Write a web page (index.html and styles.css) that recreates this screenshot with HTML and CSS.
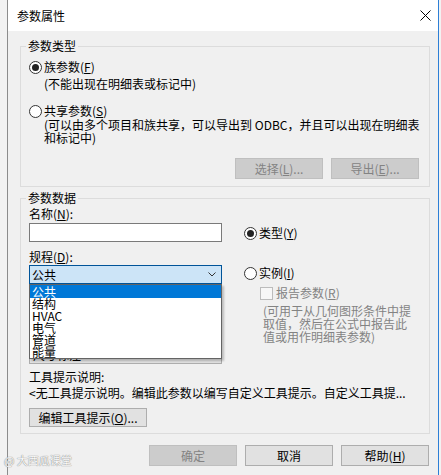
FILE: index.html
```html
<!DOCTYPE html>
<html lang="zh-CN">
<head>
<meta charset="utf-8">
<title>参数属性</title>
<link rel="stylesheet" href="styles.css">
</head>
<body>
<div class="window">
  <div class="titlebar">
    <span class="title">参数属性</span>
    <svg class="close" width="11" height="11" viewBox="0 0 11 11"><path d="M0.5 0.5L10.5 10.5M10.5 0.5L0.5 10.5" stroke="#000" stroke-width="1" fill="none"/></svg>
  </div>
  <div class="content">
    <fieldset class="group g1">
      <legend>参数类型</legend>
      <div class="g1-body">
        <div class="radio-row r1"><span class="radio checked"></span><span>族参数(<u>F</u>)</span></div>
        <div class="note n1">(不能出现在明细表或标记中)</div>
        <div class="radio-row r2"><span class="radio"></span><span>共享参数(<u>S</u>)</span></div>
        <div class="note n2">(可以由多个项目和族共享，可以导出到 ODBC，并且可以出现在明细表<br>和标记中)</div>
        <div class="btn-row">
          <button class="btn disabled">选择(<u>L</u>)...</button>
          <button class="btn disabled">导出(<u>E</u>)...</button>
        </div>
      </div>
    </fieldset>

    <fieldset class="group g2">
      <legend>参数数据</legend>
      <div class="g2-body">
        <div class="cols">
          <div class="col-left">
            <div class="label l-name">名称(<u>N</u>):</div>
            <div class="input"></div>
            <div class="label l-disc">规程(<u>D</u>):</div>
            <div class="select-wrap">
              <div class="select">
                <span>公共</span>
                <svg class="chev" width="8" height="5" viewBox="0 0 8 5"><path d="M0.5 0.5L4 4L7.5 0.5" stroke="#333" stroke-width="1" fill="none"/></svg>
              </div>
              <div class="dropdown">
                <div class="opt sel">公共</div>
                <div class="opt">结构</div>
                <div class="opt">HVAC</div>
                <div class="opt">电气</div>
                <div class="opt">管道</div>
                <div class="opt">能量</div>
              </div>
            </div>
            <div class="combo c2"><span class="combo-text">尺寸标注</span></div>
          </div>
          <div class="col-right">
            <div class="radio-row rt"><span class="radio checked"></span><span>类型(<u>Y</u>)</span></div>
            <div class="radio-row ri"><span class="radio"></span><span>实例(<u>I</u>)</span></div>
            <div class="check-row"><span class="checkbox"></span><span>报告参数(<u>R</u>)</span></div>
            <div class="gray-note">(可用于从几何图形条件中提<br>取值，然后在公式中报告此<br>值或用作明细表参数)</div>
          </div>
        </div>
        <div class="label tip-label">工具提示说明:</div>
        <div class="tip-text">&lt;无工具提示说明。编辑此参数以编写自定义工具提示。自定义工具提...</div>
        <button class="btn tip-btn">编辑工具提示(<u>O</u>)...</button>
      </div>
    </fieldset>

    <div class="footer">
      <button class="btn disabled">确定</button>
      <button class="btn">取消</button>
      <button class="btn">帮助(<u>H</u>)</button>
    </div>
  </div>
</div>
<div class="watermark">@ 大西瓜课堂</div>
</body>
</html>
```

FILE: styles.css
```css
* { box-sizing: border-box; }
html, body { margin: 0; padding: 0; }
body {
  width: 441px;
  height: 475px;
  overflow: hidden;
  position: relative;
  background: #f2f2f2;
  font-family: "Noto Sans CJK SC", "Microsoft YaHei", sans-serif;
  font-size: 12px;
  color: #000;
}
.window {
  margin-left: 7px;
  width: 432px;
  height: 475px;
  border-left: 1px solid #8c8c8c;
  border-right: 1px solid #2d7fd6;
  background: #f0f0f0;
}
.titlebar {
  height: 31px;
  background: #fff;
  display: flex;
  align-items: center;
  justify-content: space-between;
  padding: 0 7px 0 9px;
  line-height: 14px;
}
.close { display: block; }
.content { padding: 0 8px 0 12px; }

.group {
  margin: 0;
  padding: 0;
  min-width: 0;
  border: 1px solid #dcdcdc;
}
.group legend {
  margin-left: 5px;
  padding: 0 2px;
  line-height: 16px;
}
.g1 { margin-top: 7px; }
.g2 { margin-top: 3px; }

.g1-body { padding: 0 10px 7px 8px; }
.radio-row {
  display: flex;
  align-items: center;
  gap: 2px;
  line-height: 14px;
  height: 14px;
}
.radio {
  width: 13px;
  height: 13px;
  border: 1px solid #333;
  border-radius: 50%;
  background: #fff;
  display: flex;
  align-items: center;
  justify-content: center;
  flex: none;
}
.radio.checked::after {
  content: "";
  width: 7px;
  height: 7px;
  border-radius: 50%;
  background: #222;
}
.r1 { margin-top: 6px; }
.note { padding-left: 15px; line-height: 14px; white-space: nowrap; }
.n1 { margin-top: 3px; }
.r2 { margin-top: 13px; }
.n2 { line-height: 13px; }
.btn-row {
  margin-top: 14px;
  display: flex;
  justify-content: flex-end;
  gap: 8px;
}
.btn {
  font-family: inherit;
  font-size: 12px;
  color: #000;
  width: 88px;
  height: 21px;
  padding: 0;
  margin: 0;
  background: #e1e1e1;
  border: 1px solid #adadad;
  line-height: 18px;
}
.btn.disabled {
  background: #cccccc;
  border-color: #bfbfbf;
  color: #838383;
}

.g2-body { padding: 0 8px 6px 8px; }
.cols { display: flex; gap: 22px; }
.col-left { width: 193px; flex: none; }
.label { line-height: 14px; }
.l-name { margin-top: 1px; }
.input {
  margin-top: 2px;
  height: 19px;
  background: #fff;
  border: 1px solid #7a7a7a;
}
.l-disc { margin-top: 8px; }
.select-wrap { margin-top: 1px; position: relative; }
.select {
  height: 19px;
  background: #cce4f7;
  border: 1px solid #005499;
  display: flex;
  align-items: center;
  justify-content: space-between;
  padding: 0 5px 0 2px;
  line-height: 14px;
}
.chev { display: block; }
.dropdown {
  position: absolute;
  top: 100%;
  left: 0;
  width: 193px;
  background: #fff;
  border: 1px solid #646464;
  box-shadow: 2px 2px 2px rgba(0, 0, 0, 0.22);
  z-index: 2;
}
.opt {
  height: 12px;
  line-height: 12px;
  padding-left: 2px;
  font-size: 12px;
}
.opt.sel {
  height: 13px;
  line-height: 13px;
  background: #0078d7;
  color: #fff;
}
.combo {
  height: 20px;
  background: #e1e1e1;
  border: 1px solid #adadad;
  padding-left: 3px;
  line-height: 18px;
}
.c2 { margin-top: 60px; }
.combo-text { position: relative; top: 1px; }

.col-right { flex: 1; }
.rt { margin-top: 20px; }
.ri { margin-top: 26px; }
.check-row {
  margin-top: 6px;
  padding-left: 16px;
  display: flex;
  align-items: center;
  gap: 3px;
  line-height: 14px;
  color: #838383;
}
.checkbox {
  width: 13px;
  height: 13px;
  border: 1px solid #bcbcbc;
  background: #f7f7f7;
  flex: none;
}
.gray-note {
  margin-top: 4px;
  padding-left: 19px;
  line-height: 13px;
  color: #838383;
  white-space: nowrap;
}
.tip-label { margin-top: 6px; }
.tip-text { margin-top: 2px; line-height: 14px; white-space: nowrap; }
.tip-btn {
  margin-top: 8px;
  width: 118px;
  height: 19px;
  line-height: 16px;
  display: block;
}

.footer {
  margin-top: 11px;
  margin-right: 1px;
  display: flex;
  justify-content: flex-end;
  gap: 8px;
}

.watermark {
  position: absolute;
  left: 4px;
  top: 453px;
  font-size: 11px;
  line-height: 14px;
  color: #fafafa;
  text-shadow: 0 0 1px #8a8a8a, 0 0 1px #8a8a8a;
}
```
